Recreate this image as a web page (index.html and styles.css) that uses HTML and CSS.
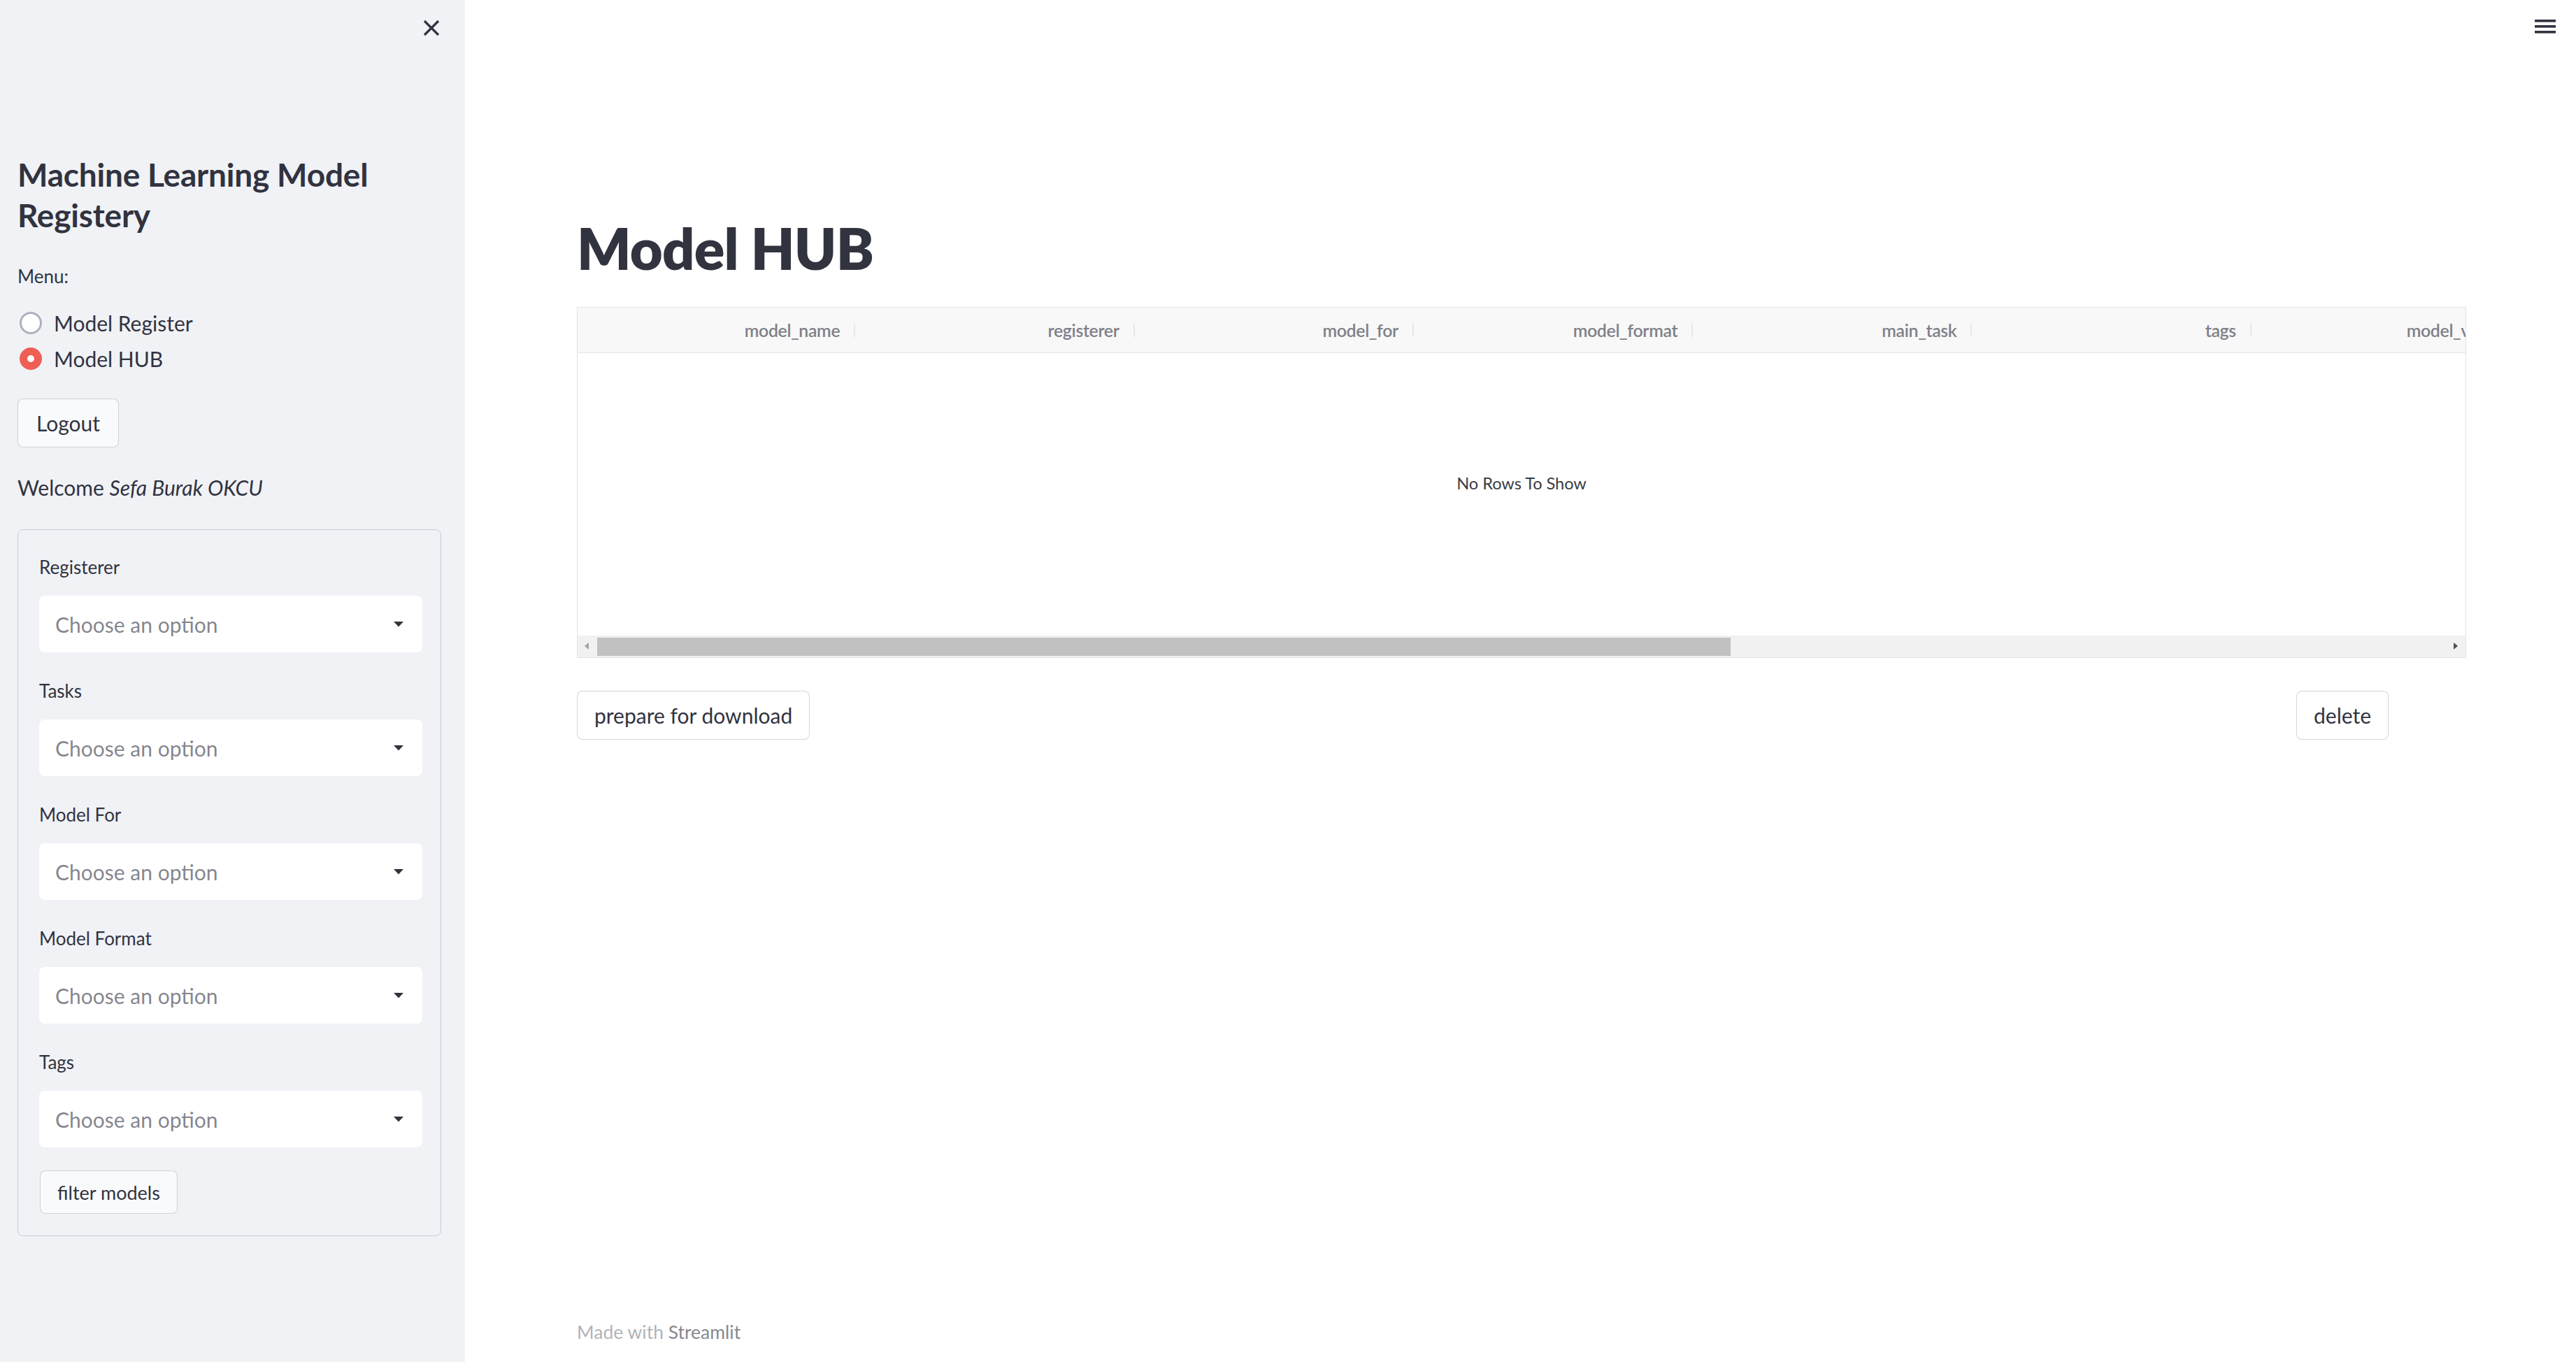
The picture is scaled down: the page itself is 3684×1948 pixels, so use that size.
FILE: index.html
```html
<!DOCTYPE html>
<html lang="en">
<head>
<meta charset="utf-8">
<title>Model HUB</title>
<link rel="stylesheet" href="styles.css">
</head>
<body>
<div class="app">
  <aside class="sidebar">
    <div class="sb-top">
      <button class="close" aria-label="Close sidebar">
        <svg width="24" height="24" viewBox="0 0 24 24"><path d="M2 2 L22 22 M22 2 L2 22" stroke="#31333f" stroke-width="3.2" fill="none"/></svg>
      </button>
    </div>
    <h1 class="sb-title">Machine Learning Model Registery</h1>
    <div class="menu-label">Menu:</div>
    <div class="radios">
      <div class="radio"><span class="dot"></span><span>Model Register</span></div>
      <div class="radio on"><span class="dot"></span><span>Model HUB</span></div>
    </div>
    <button class="btn logout">Logout</button>
    <p class="welcome">Welcome <em>Sefa Burak OKCU</em></p>
    <form class="filter">
      <div class="field">
        <div class="flabel">Registerer</div>
        <div class="select"><span>Choose an option</span><svg width="14" height="8" viewBox="0 0 14 8"><polygon points="0,0 14,0 7,7.5" fill="#31333f"/></svg></div>
      </div>
      <div class="field">
        <div class="flabel">Tasks</div>
        <div class="select"><span>Choose an option</span><svg width="14" height="8" viewBox="0 0 14 8"><polygon points="0,0 14,0 7,7.5" fill="#31333f"/></svg></div>
      </div>
      <div class="field">
        <div class="flabel">Model For</div>
        <div class="select"><span>Choose an option</span><svg width="14" height="8" viewBox="0 0 14 8"><polygon points="0,0 14,0 7,7.5" fill="#31333f"/></svg></div>
      </div>
      <div class="field">
        <div class="flabel">Model Format</div>
        <div class="select"><span>Choose an option</span><svg width="14" height="8" viewBox="0 0 14 8"><polygon points="0,0 14,0 7,7.5" fill="#31333f"/></svg></div>
      </div>
      <div class="field last">
        <div class="flabel">Tags</div>
        <div class="select"><span>Choose an option</span><svg width="14" height="8" viewBox="0 0 14 8"><polygon points="0,0 14,0 7,7.5" fill="#31333f"/></svg></div>
      </div>
      <button type="button" class="btn small">filter models</button>
    </form>
  </aside>
  <main class="main">
    <div class="top">
      <svg width="30" height="20" viewBox="0 0 30 20"><rect x="0" y="0" width="30" height="3.6" fill="#31333f"/><rect x="0" y="8" width="30" height="3.6" fill="#31333f"/><rect x="0" y="16" width="30" height="3.6" fill="#31333f"/></svg>
    </div>
    <div class="content">
      <h1 class="title">Model HUB</h1>
      <div class="grid">
        <div class="ghead">
          <div class="hcell"><span>model_name</span></div>
          <div class="hcell"><span>registerer</span></div>
          <div class="hcell"><span>model_for</span></div>
          <div class="hcell"><span>model_format</span></div>
          <div class="hcell"><span>main_task</span></div>
          <div class="hcell"><span>tags</span></div>
          <div class="hcell"><span>model_version</span></div>
        </div>
        <div class="gbody"><span>No Rows To Show</span></div>
        <div class="gscroll">
          <span class="arr left"></span>
          <span class="thumb"></span>
          <span class="arr right"></span>
        </div>
      </div>
      <div class="actions">
        <button class="btn">prepare for download</button>
        <button class="btn">delete</button>
      </div>
      <footer class="foot">Made with <span>Streamlit</span></footer>
    </div>
  </main>
</div>
</body>
</html>
```

FILE: styles.css
```css
* { box-sizing: border-box; }
html, body { margin: 0; padding: 0; }
body {
  font-family: "Lato", "Noto Sans", sans-serif;
  color: #31333f;
  background: #ffffff;
  width: 3684px;
  height: 1948px;
  overflow: hidden;
}
.app { display: flex; width: 3684px; height: 1948px; }

/* sidebar */
.sidebar {
  width: 665px;
  flex-shrink: 0;
  height: 1948px;
  background: #f0f2f6;
  padding: 0 34px 0 25px;
}
.sb-top { display: flex; justify-content: flex-end; padding-top: 28px; height: 52px; margin-right: 2px; }
.close { border: 0; background: none; padding: 0; width: 24px; height: 24px; display: block; }
.close svg { display: block; }
.sb-title {
  margin: 169px 0 0 0;
  font-size: 46px;
  line-height: 58px;
  font-weight: 700;
  letter-spacing: -0.2px;
}
.menu-label { margin-top: 38px; font-size: 26px; line-height: 40px; }
.radios { margin-top: 21px; }
.radio { display: flex; align-items: center; height: 51px; font-size: 30px; }
.dot {
  width: 32px; height: 32px; border-radius: 50%;
  border: 3.5px solid #acb0c0; background: #ffffff;
  margin: 0 17px 0 3px; flex-shrink: 0;
}
.radio.on .dot { border: 11px solid #ee5e55; background: #ffffff; }

.btn {
  font-family: "Lato", "Noto Sans", sans-serif;
  color: #31333f;
  background: #ffffff;
  border: 1.5px solid rgba(49,51,63,0.2);
  border-radius: 8px;
  height: 70px;
  padding: 0 24px;
  font-size: 30px;
  display: inline-flex; align-items: center; justify-content: center;
}
.logout { margin-top: 32px; background: #f9fafb; width: 145px; }
.welcome { margin: 37px 0 0 0; font-size: 30px; line-height: 40px; }

.filter {
  margin-top: 40px;
  border: 1.5px solid rgba(49,51,63,0.2);
  border-radius: 8px;
  padding: 33px 26px 31px 30px;
  display: flex; flex-direction: column; align-items: flex-start;
}
.field { width: 100%; margin-bottom: 35px; }
.field.last { margin-bottom: 33px; }
.flabel { font-size: 26px; line-height: 40px; margin-bottom: 21px; }
.select {
  height: 81px; background: #ffffff; border-radius: 8px;
  display: flex; align-items: center; justify-content: space-between;
  padding: 0 27px 0 23px;
  font-size: 30px; color: rgba(49,51,63,0.6);
}
.select svg { display: block; }
.btn.small { height: 62px; font-size: 27px; padding: 0 24px; background: #f9fafb; margin-left: 1px; width: 197px; }

/* main */
.main { flex: 1; min-width: 0; display: flex; flex-direction: column; height: 1948px; }
.top { height: 80px; display: flex; justify-content: flex-end; padding: 28px 29px 0 0; }
.top svg { display: block; }
.content { flex: 1; min-width: 0; display: flex; flex-direction: column; padding: 0 157px 0 160px; }
.title {
  margin: 225px 0 0 0;
  font-size: 81px; line-height: 100px; font-weight: 800;
  letter-spacing: -0.8px;
}
.grid {
  margin-top: 34px;
  height: 502px;
  width: 100%;
  min-width: 0;
  border: 1.5px solid #e4e4e6;
  display: flex; flex-direction: column;
  overflow: hidden;
}
.ghead {
  height: 65px; flex-shrink: 0;
  background: #f8f8f8;
  border-bottom: 1.5px solid #e4e4e6;
  display: flex;
  overflow: hidden;
}
.hcell {
  width: 399.3px; flex-shrink: 0;
  position: relative;
  display: flex; align-items: center; justify-content: flex-end;
  padding-right: 24px;
  font-size: 24.8px; font-weight: 600; color: #7e8089;
  letter-spacing: -0.3px;
}
.hcell::after {
  content: ""; position: absolute; right: 2px; top: 22px;
  width: 2px; height: 20px; background: #e8e8ea;
}
.gbody {
  flex: 1; display: flex; align-items: center; justify-content: center;
  padding-bottom: 33px;
  font-size: 23.5px; color: #3a3b45;
}
.gscroll {
  height: 31px; flex-shrink: 0;
  background: #f1f1f1;
  display: flex; align-items: center;
  position: relative;
}
.thumb { display: block; margin-left: 28px; width: 1621px; height: 26px; background: #c1c1c1; }
.arr { position: absolute; top: 10px; width: 0; height: 0; border-top: 5px solid transparent; border-bottom: 5px solid transparent; }
.arr.left { left: 10px; border-right: 6px solid #a3a3a3; }
.arr.right { right: 11px; border-left: 6px solid #505050; }

.actions { margin-top: 47px; display: flex; justify-content: space-between; padding-right: 111px; }

.foot {
  margin-top: auto; margin-bottom: 23px;
  font-size: 26.5px; line-height: 40px;
  color: rgba(49,51,63,0.4);
}
.foot span { color: rgba(49,51,63,0.6); }
```
